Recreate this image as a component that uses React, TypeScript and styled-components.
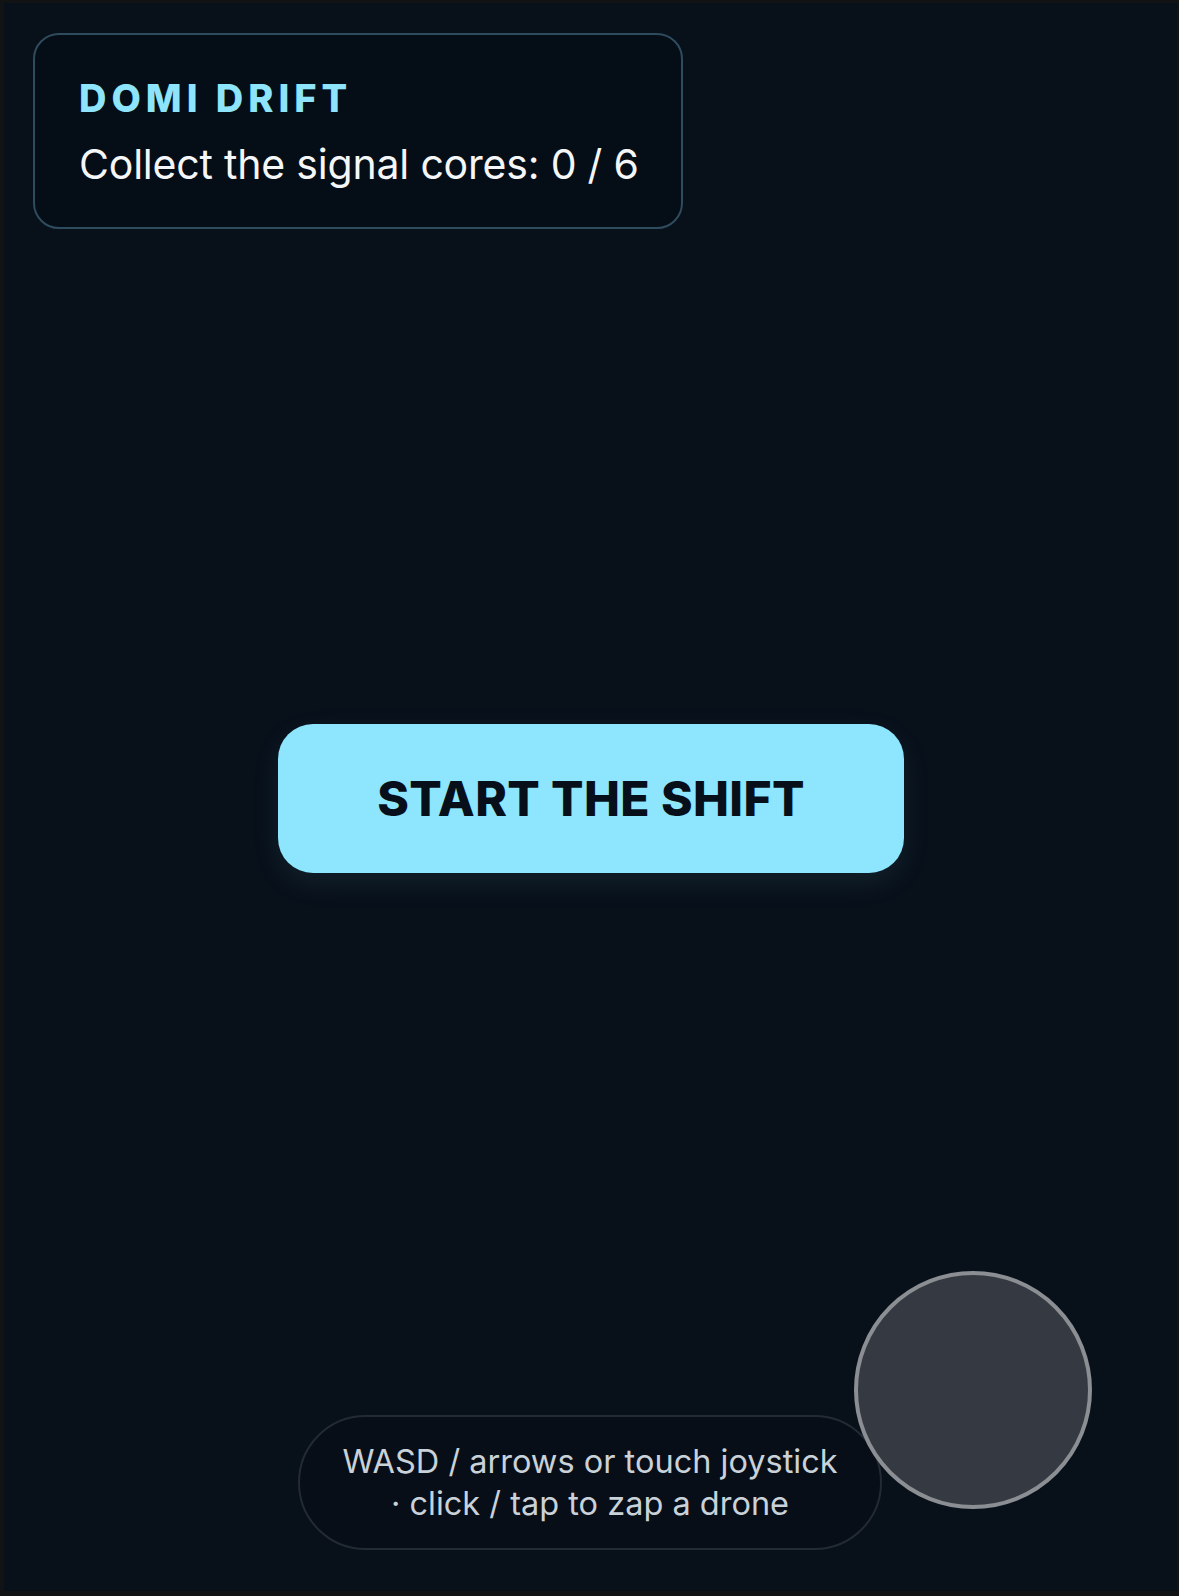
import React from 'react'
import styled, { createGlobalStyle } from 'styled-components'

const Global = createGlobalStyle`
  html, body {
    margin: 0;
    padding: 0;
    background: #121315;
    font-family: Inter, "Noto Sans", "Liberation Sans", sans-serif;
  }
  #root {
    padding: 3px 2px 5px 4px;
  }
`

export default function App() {
  return (
    <>
      <Global />
      <Stage>
        <Hud>
          <HudTitle>DOMI DRIFT</HudTitle>
          <HudLine>Collect the signal cores: 0 / 6</HudLine>
        </Hud>
        <StartButton>START THE SHIFT</StartButton>
        <Hint>
          WASD / arrows or touch joystick
          <br />· click / tap to zap a drone
        </Hint>
        <Joystick />
      </Stage>
    </>
  )
}

const Stage = styled.main`
  position: relative;
  height: 1588px;
  background: #08101a;
  overflow: hidden;
`
const Hud = styled.section`
  position: absolute;
  left: 29px;
  top: 30px;
  width: 650px;
  height: 196px;
  box-sizing: border-box;
  padding: 40px 0 0 44px;
  border: 2px solid #2f4b5e;
  border-radius: 26px;
  background: #050d16;
`
const HudTitle = styled.h1`
  margin: 0;
  font-size: 38px;
  line-height: 46px;
  font-weight: 800;
  letter-spacing: 5px;
  color: #8ee4fa;
`
const HudLine = styled.p`
  margin: 18px 0 0;
  font-size: 41px;
  line-height: 50px;
  font-weight: 400;
  color: #f4f6f8;
  letter-spacing: -0.2px;
`
const StartButton = styled.button`
  position: absolute;
  left: 274px;
  top: 721px;
  width: 626px;
  height: 149px;
  border: none;
  border-radius: 35px;
  background: #8de6fd;
  color: #07101a;
  font-family: Inter, "Noto Sans", "Liberation Sans", sans-serif;
  font-size: 48px;
  font-weight: 800;
  letter-spacing: 0.4px;
  box-shadow: 0 10px 30px rgba(141, 230, 253, 0.08);
  cursor: pointer;
`
const Hint = styled.div`
  position: absolute;
  left: 294px;
  top: 1412px;
  width: 584px;
  height: 135px;
  box-sizing: border-box;
  display: flex;
  align-items: center;
  justify-content: center;
  text-align: center;
  border: 2px solid #232a33;
  border-radius: 68px;
  background: #070e17;
  color: #c9d1d9;
  font-size: 32.5px;
  line-height: 42px;
`
const Joystick = styled.div`
  position: absolute;
  left: 850px;
  top: 1268px;
  width: 238px;
  height: 238px;
  box-sizing: border-box;
  border-radius: 50%;
  border: 4px solid #8b8e93;
  background: #353a42;
`
